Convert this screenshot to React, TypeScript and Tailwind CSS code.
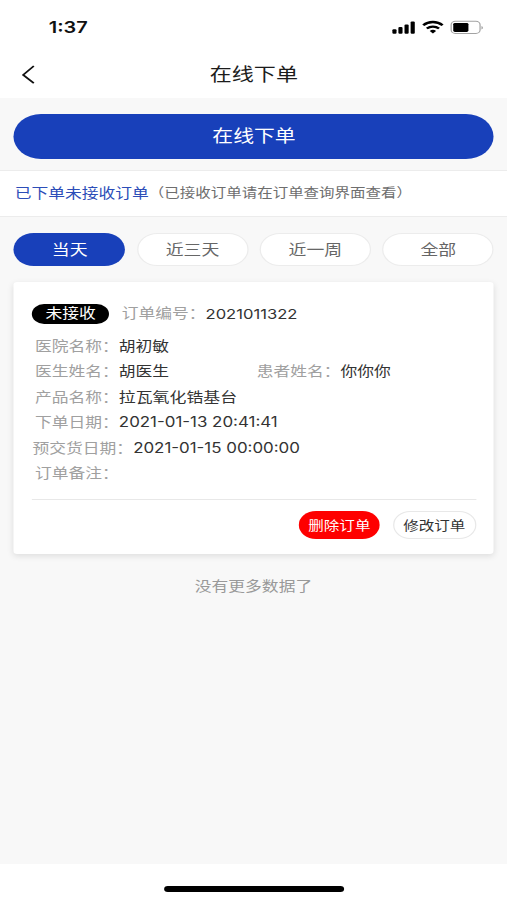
import React, { useState } from "react";

interface Field {
  label: string;
  value: string;
  wide?: boolean;
}

const tabs = ["当天", "近三天", "近一周", "全部"];

const fields: Field[] = [
  { label: "产品名称：", value: "拉瓦氧化锆基台" },
  { label: "下单日期：", value: "2021-01-13 20:41:41" },
  { label: "预交货日期：", value: "2021-01-15 00:00:00", wide: true },
  { label: "订单备注：", value: "" },
];

function StatusBar() {
  return (
    <div className="flex h-[50px] items-center justify-between pl-[39.8px] pr-[18.6px] pt-[5px]">
      <span className="text-[16.3px] font-semibold leading-none text-[#111]">1:37</span>
      <svg width="75" height="16" viewBox="0 0 75 16" fill="none">
        <rect x="0.4" y="9.3" width="3.4" height="4.4" rx="1" fill="#000" />
        <rect x="5.3" y="7" width="3.4" height="6.7" rx="1" fill="#000" />
        <rect x="10.3" y="4.4" width="3.4" height="9.3" rx="1" fill="#000" />
        <rect x="15.3" y="1.6" width="3.4" height="12.1" rx="1" fill="#000" />
        <path d="M25.6 5.2C30 .9 37 .9 41.4 5.2" stroke="#000" strokeWidth="2.3" />
        <path d="M28.5 8.5C31.4 5.9 35.6 5.9 38.5 8.5" stroke="#000" strokeWidth="2.2" />
        <path d="M30.9 10.9c1.5-1.5 3.7-1.5 5.2 0l-2.6 2.6z" fill="#000" />
        <rect x="48.4" y="1.3" width="23.6" height="12.2" rx="3.4" stroke="#a3a3a3" />
        <rect x="50.1" y="2.9" width="12.4" height="9" rx="1.4" fill="#000" />
        <path d="M73.2 5.9c1.5.6 1.5 3 0 3.6z" fill="#999" />
      </svg>
    </div>
  );
}

function Label({ children }: { children: React.ReactNode }) {
  return <span className="text-[#a0a0a0]">{children}</span>;
}

export default function App() {
  const [active, setActive] = useState("当天");

  return (
    <div className="h-[900px] w-[507px] overflow-hidden bg-white">
      <div
        lang="zh-CN"
        className="flex h-[900px] w-[414px] origin-top-left scale-x-[1.22464] flex-col font-['Inter','Noto_Sans_CJK_SC',sans-serif] text-[13.7px] text-[#333]"
      >
        <StatusBar />

        <header className="grid h-[48px] grid-cols-[1fr_auto_1fr] items-center px-[17px]">
          <svg width="12" height="20" viewBox="0 0 12 20" fill="none">
            <path d="M10.6 2L1.9 10.9l8.7 8.2" stroke="#111" strokeWidth="1.6" />
          </svg>
          <h1 className="pl-[0.6px] pt-[2px] text-[18px] leading-none text-[#1c1c1c]">在线下单</h1>
        </header>

        <main className="flex flex-1 flex-col bg-[#f8f8f8]">
          <div className="pb-[11px] pl-[11.4px] pr-[10.6px] pt-[16px]">
            <button className="h-[45px] w-full rounded-full bg-[#1840ba] text-[17px] text-white">
              在线下单
            </button>
          </div>

          <div className="flex h-[47px] items-center whitespace-nowrap border-y border-[#ececec] bg-white pl-[12px]">
            <span className="text-[13.7px] text-[#2c4db8]">已下单未接收订单</span>
            <span className="text-[12.65px] text-[#6e6e6e]">（已接收订单请在订单查询界面查看）</span>
          </div>

          <div className="grid grid-cols-4 gap-[9.3px] pl-[11.4px] pr-[10.6px] pt-[16px]">
            {tabs.map((tab) => (
              <button
                key={tab}
                onClick={() => setActive(tab)}
                className={
                  tab === active
                    ? "h-[33px] rounded-full bg-[#1840ba] pt-[2px] text-[14.6px] text-white"
                    : "h-[33px] rounded-full border border-[#ececec] bg-white pt-[2px] text-[14.6px] text-[#666]"
                }
              >
                {tab}
              </button>
            ))}
          </div>

          <section className="ml-[11.4px] mr-[10.6px] mt-[16px] h-[271.5px] rounded-[3px] bg-white px-[14.8px] pt-[19px] shadow-[0_2px_6px_rgba(0,0,0,0.11)]">
            <div className="flex h-[25.5px] items-center">
              <span className="flex h-[20.5px] w-[63px] items-center justify-center rounded-full bg-black text-white">
                未接收
              </span>
              <span className="ml-[10.2px]">
                <Label>订单编号：</Label>
              </span>
              <span className="text-[13.55px]">2021011322</span>
            </div>

            <div className="mt-[6.7px] pl-[2.4px]">
              <div className="flex h-[25.5px] items-center">
                <Label>医院名称：</Label>
                <span>胡初敏</span>
              </div>
              <div className="flex h-[25.5px] items-center">
                <span className="w-[181px]">
                  <Label>医生姓名：</Label>胡医生
                </span>
                <Label>患者姓名：</Label>
                <span>你你你</span>
              </div>
              {fields.map((f) => (
                <div
                  key={f.label}
                  className={f.wide ? "-ml-[2px] flex h-[25.5px] items-center" : "flex h-[25.5px] items-center"}
                >
                  <Label>{f.label}</Label>
                  <span className="text-[13.8px]">{f.value}</span>
                </div>
              ))}
            </div>

            <div className="mt-[13.3px] flex justify-end gap-[10.5px] border-t border-[#e8e8e8] pt-[10.5px] text-[12.7px]">
              <button className="h-[28px] w-[66px] rounded-full bg-[#fe0000] pt-px text-white">删除订单</button>
              <button className="h-[28px] w-[68px] rounded-full border border-[#e8e8e8] bg-white pt-[2px] text-[#333]">
                修改订单
              </button>
            </div>
          </section>

          <p className="mt-[22.5px] text-center text-[#999]">没有更多数据了</p>
        </main>

        <footer className="flex h-[36px] justify-center bg-white pt-[21.5px]">
          <div className="h-[6px] w-[147px] rounded-full bg-black" />
        </footer>
      </div>
    </div>
  );
}
